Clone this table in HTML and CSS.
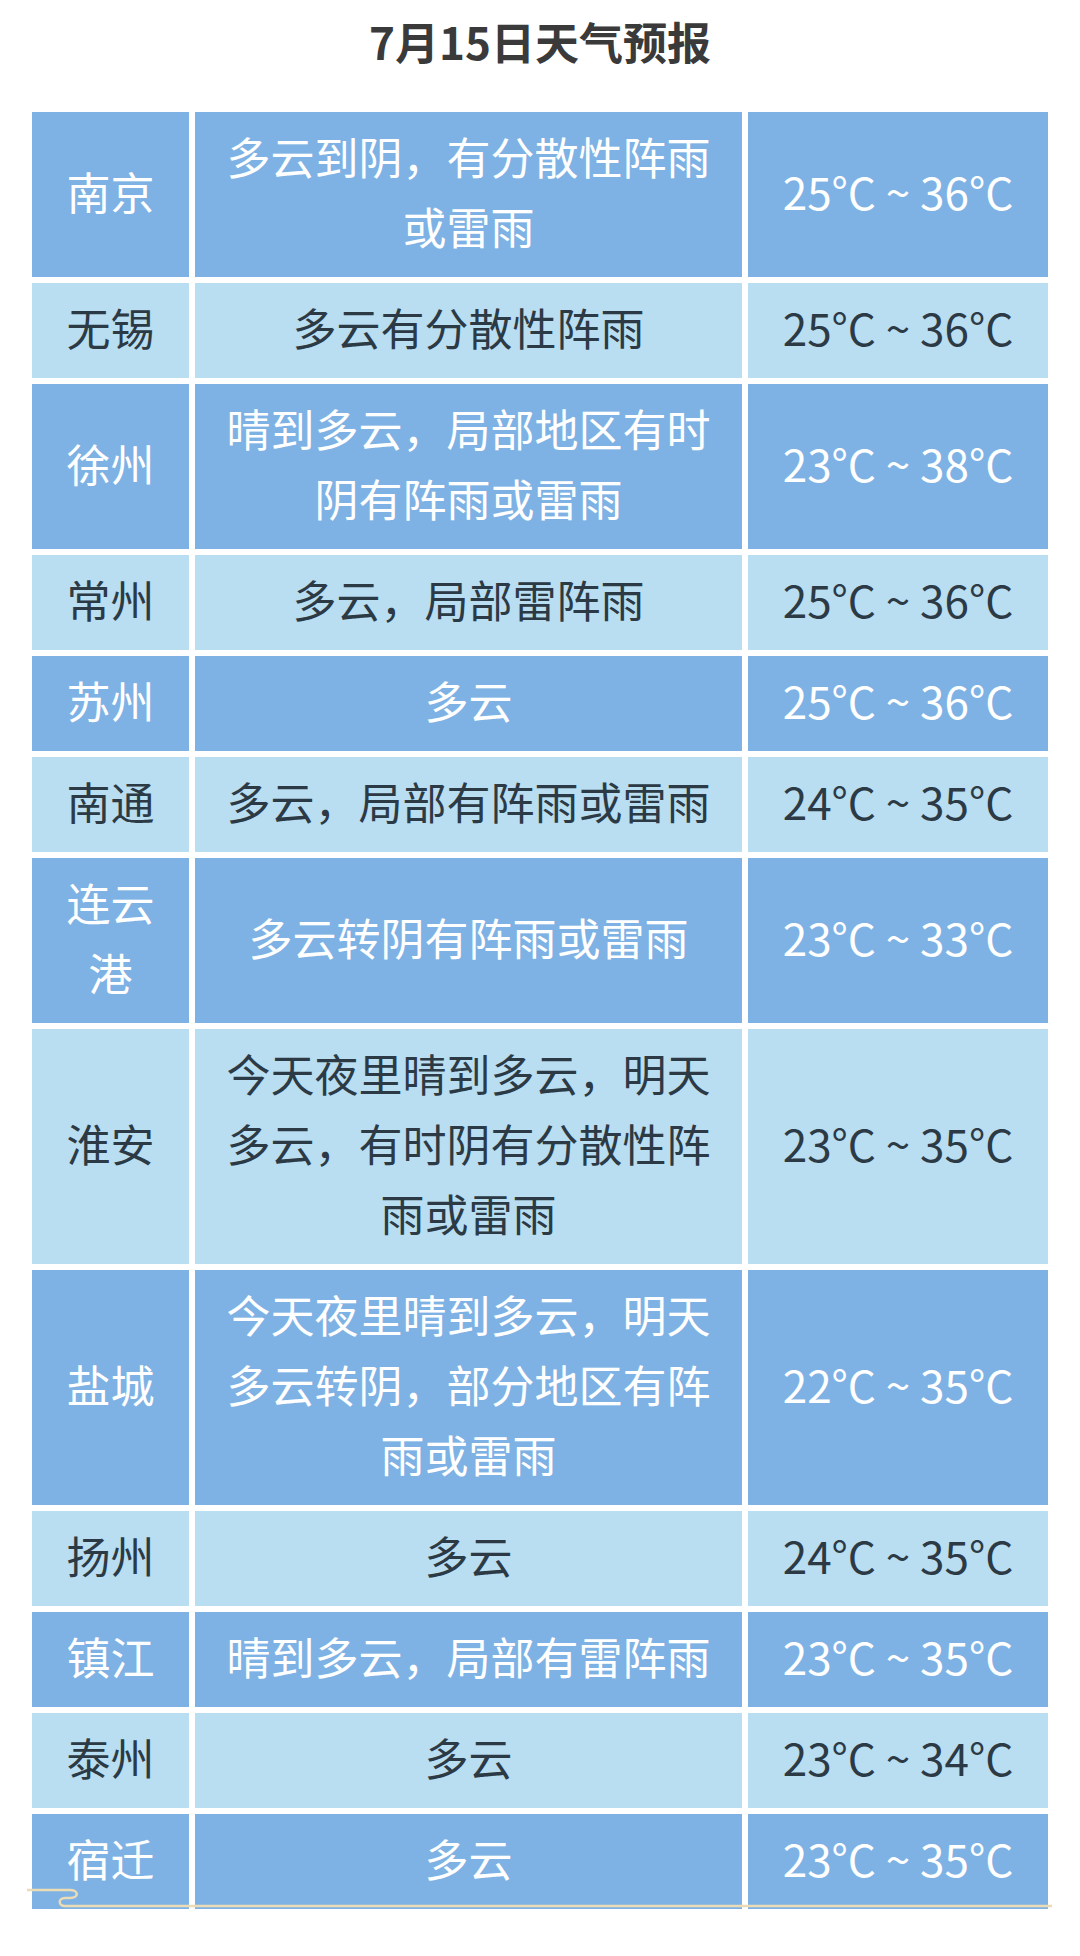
FILE: index.html
```html
<!DOCTYPE html>
<html lang="zh-CN">
<head>
<meta charset="utf-8">
<title>7月15日天气预报</title>
<link rel="stylesheet" href="styles.css">
</head>
<body>
<h1 class="title">7月15日天气预报</h1>
<div class="table-wrap">
  <div class="table">
    <div class="row dark"><div class="cell city">南京</div><div class="cell desc">多云到阴，有分散性阵雨或雷雨</div><div class="cell temp">25°C ~ 36°C</div></div>
    <div class="row light"><div class="cell city">无锡</div><div class="cell desc">多云有分散性阵雨</div><div class="cell temp">25°C ~ 36°C</div></div>
    <div class="row dark"><div class="cell city">徐州</div><div class="cell desc">晴到多云，局部地区有时阴有阵雨或雷雨</div><div class="cell temp">23°C ~ 38°C</div></div>
    <div class="row light"><div class="cell city">常州</div><div class="cell desc">多云，局部雷阵雨</div><div class="cell temp">25°C ~ 36°C</div></div>
    <div class="row dark"><div class="cell city">苏州</div><div class="cell desc">多云</div><div class="cell temp">25°C ~ 36°C</div></div>
    <div class="row light"><div class="cell city">南通</div><div class="cell desc">多云，局部有阵雨或雷雨</div><div class="cell temp">24°C ~ 35°C</div></div>
    <div class="row dark"><div class="cell city">连云港</div><div class="cell desc">多云转阴有阵雨或雷雨</div><div class="cell temp">23°C ~ 33°C</div></div>
    <div class="row light"><div class="cell city">淮安</div><div class="cell desc">今天夜里晴到多云，明天多云，有时阴有分散性阵雨或雷雨</div><div class="cell temp">23°C ~ 35°C</div></div>
    <div class="row dark"><div class="cell city">盐城</div><div class="cell desc">今天夜里晴到多云，明天多云转阴，部分地区有阵雨或雷雨</div><div class="cell temp">22°C ~ 35°C</div></div>
    <div class="row light"><div class="cell city">扬州</div><div class="cell desc">多云</div><div class="cell temp">24°C ~ 35°C</div></div>
    <div class="row dark"><div class="cell city">镇江</div><div class="cell desc">晴到多云，局部有雷阵雨</div><div class="cell temp">23°C ~ 35°C</div></div>
    <div class="row light"><div class="cell city">泰州</div><div class="cell desc">多云</div><div class="cell temp">23°C ~ 34°C</div></div>
    <div class="row dark"><div class="cell city">宿迁</div><div class="cell desc">多云</div><div class="cell temp">23°C ~ 35°C</div></div>
  </div>
  <svg class="deco" width="1060" height="24" viewBox="0 0 1060 24" aria-hidden="true">
    <path d="M27 4 H70 C79 4 79 12 70 12 H65 C58 12 58 20 65 20 H1052" fill="none" stroke="#ecdcb6" stroke-width="2.5"/>
  </svg>
</div>
</body>
</html>
```

FILE: styles.css
```css
html, body {
  margin: 0;
  padding: 0;
  background: #ffffff;
}

body {
  font-family: "Noto Sans CJK SC", "Noto Sans", sans-serif;
  width: 1080px;
}

.title {
  margin: 0;
  padding-top: 13px;
  height: 94px;
  box-sizing: border-box;
  text-align: center;
  font-size: 44px;
  line-height: 56px;
  font-weight: 700;
  color: #3a3a3a;
}

.table-wrap {
  position: relative;
  margin: 18px 0 0 32px;
  width: 1016px;
}

.table {
  display: flex;
  flex-direction: column;
  gap: 6px;
}

.row {
  display: grid;
  grid-template-columns: 157px 547px 300px;
  column-gap: 6px;
}

.cell {
  display: flex;
  align-items: center;
  justify-content: center;
  text-align: center;
  font-size: 44px;
  line-height: 70px;
  padding: 9px 0 16px;
}

.city {
  padding-left: 28px;
  padding-right: 28px;
}

.desc {
  padding-left: 20px;
  padding-right: 20px;
}

.temp {
  padding-left: 10px;
  padding-right: 10px;
}

.dark .cell {
  background: #7eb2e4;
  color: #ffffff;
}

.light .cell {
  background: #b9ddf1;
  color: #2b3a44;
}

.deco {
  position: absolute;
  left: -32px;
  bottom: -1px;
  display: block;
}
```
